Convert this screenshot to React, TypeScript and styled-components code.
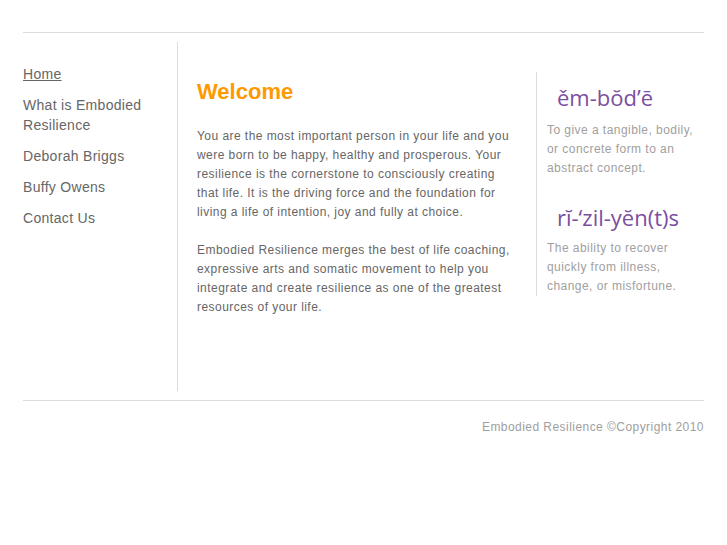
import { FC } from 'react'
import styled, { createGlobalStyle } from 'styled-components'

const GlobalStyle = createGlobalStyle`
	html, body {
		margin: 0;
		padding: 0;
		background: #ffffff;
	}
	body {
		font-family: 'Liberation Sans', Arial, sans-serif;
	}
`

const Page = styled.div`
	width: 681px;
	margin: 0 auto;
`

const Header = styled.div`
	height: 32px;
	border-bottom: 1px solid #dcdcdc;
`

const Body = styled.div`
	display: flex;
	margin: 9px 0 9px;
	min-height: 349px;
`

const Sidebar = styled.nav`
	width: 154px;
	border-right: 1px solid #dcdcdc;
	padding-top: 22px;
	display: flex;
	flex-direction: column;
	gap: 11px;
`

const NavLink = styled.a<{ $active?: boolean }>`
	font-size: 14px;
	line-height: 20px;
	color: #666666;
	letter-spacing: 0.3px;
	text-decoration: ${({ $active }) => ($active ? 'underline' : 'none')};
	cursor: pointer;
`

const Main = styled.main`
	width: 320px;
	padding: 0 19px 0 19px;
`

const Title = styled.h1`
	margin: 37px 0 22px;
	font-size: 22px;
	line-height: 26px;
	font-weight: bold;
	color: #ff9900;
`

const Paragraph = styled.p`
	margin: 0 0 19px;
	font-size: 12px;
	line-height: 19px;
	color: #666666;
	letter-spacing: 0.45px;
`

const Aside = styled.aside`
	align-self: flex-start;
	margin-top: 30px;
	width: 150px;
	padding-left: 10px;
	border-left: 1px solid #dcdcdc;
`

const Term = styled.div<{ $tight?: boolean }>`
	padding-left: 10px;
	font-family: 'Open Sans', 'DejaVu Sans', sans-serif;
	font-size: 22px;
	line-height: 30px;
	color: #7b4fa0;
	margin: 10px 0 ${({ $tight }) => ($tight ? '7px' : '9px')};
`

const Definition = styled.p`
	margin: 0 0 24px;
	font-size: 12px;
	line-height: 19px;
	color: #a0a0a0;
	letter-spacing: 0.45px;

	&:last-child {
		margin-bottom: 0;
	}
`

const Footer = styled.footer`
	border-top: 1px solid #dcdcdc;
	padding-top: 18px;
	text-align: right;
	font-size: 12px;
	line-height: 17px;
	color: #a0a0a0;
	letter-spacing: 0.45px;
`

const navItems = ['Home', 'What is Embodied Resilience', 'Deborah Briggs', 'Buffy Owens', 'Contact Us']

const App: FC = () => {
	return (
		<>
			<GlobalStyle />
			<Page>
				<Header />
				<Body>
					<Sidebar>
						{navItems.map((item, i) => (
							<NavLink key={item} $active={i === 0}>
								{i === 1 ? (
									<>
										What is Embodied
										<br />
										Resilience
									</>
								) : (
									item
								)}
							</NavLink>
						))}
					</Sidebar>
					<Main>
						<Title>Welcome</Title>
						<Paragraph>
							You are the most important person in your life and you were born to be happy, healthy and
							prosperous. Your resilience is the cornerstone to consciously creating that life. It is the
							driving force and the foundation for living a life of intention, joy and fully at choice.
						</Paragraph>
						<Paragraph>
							Embodied Resilience merges the best of life coaching, expressive arts and somatic movement to
							help you integrate and create resilience as one of the greatest resources of your life.
						</Paragraph>
					</Main>
					<Aside>
						<Term>ěm-bŏd’ē</Term>
						<Definition>To give a tangible, bodily, or concrete form to an abstract concept.</Definition>
						<Term $tight>rĭ-‘zil-yĕn(t)s</Term>
						<Definition>The ability to recover quickly from illness, change, or misfortune.</Definition>
					</Aside>
				</Body>
				<Footer>Embodied Resilience ©Copyright 2010</Footer>
			</Page>
		</>
	)
}

export default App
